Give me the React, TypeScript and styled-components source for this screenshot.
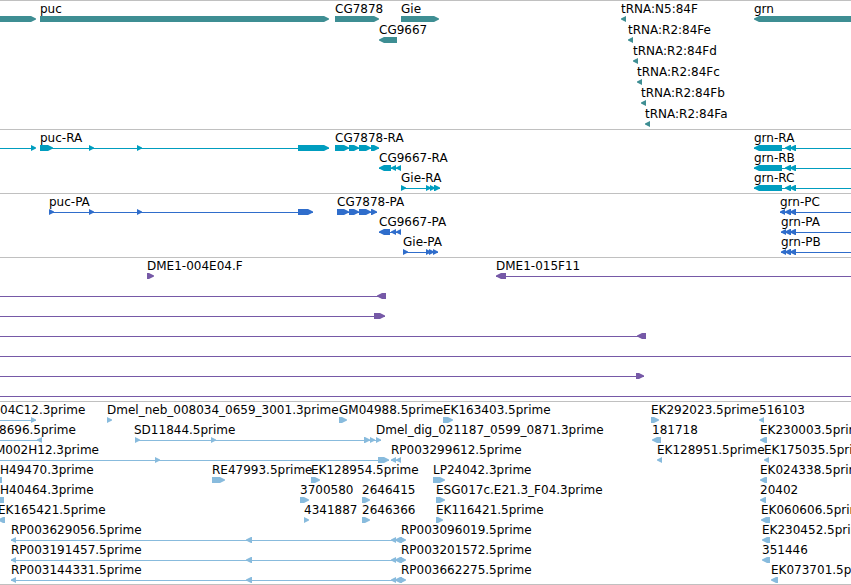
import React from "react";
import styled, { createGlobalStyle } from "styled-components";

type Dir = "l" | "r";
type Block = [start: number, end: number, dir: Dir];

interface Label {
  at: number;
  text: string;
}

interface Lane {
  labels?: Label[];
  lines?: [number, number][];
  blocks?: Block[];
}

interface TrackData {
  name: string;
  color: string;
  gap?: number;
  lanes: Lane[];
}

/* Coordinate beyond any window width, for features that run off the view. */
const END = 6000;
const HEAD = 5;

const label = (at: number, text: string): Label => ({ at, text });

const grnTranscript: Block[] = [
  [754, 782, "l"],
  [785, 791, "l"],
  [790, 796, "l"],
];

const grnProtein = (start: number): Block[] => [
  [start, start + 5, "l"],
  [785, 791, "l"],
  [790, 796, "l"],
];

const pairedReads: Block[] = [
  [11, 16, "l"],
  [246, 252, "l"],
  [391, 396, "l"],
  [395, 402, "l"],
  [400, 406, "r"],
];

const tracks: TrackData[] = [
  {
    name: "Genes",
    color: "#3e8e93",
    gap: 1,
    lanes: [
      {
        labels: [
          label(40, "puc"),
          label(335, "CG7878"),
          label(401, "Gie"),
          label(621, "tRNA:N5:84F"),
          label(754, "grn"),
        ],
        blocks: [
          [-20, 36, "r"],
          [40, 329, "r"],
          [335, 379, "r"],
          [401, 439, "r"],
          [621, 626, "l"],
          [754, END, "l"],
        ],
      },
      {
        labels: [label(379, "CG9667"), label(628, "tRNA:R2:84Fe")],
        blocks: [
          [379, 397, "l"],
          [628, 633, "l"],
        ],
      },
      { labels: [label(633, "tRNA:R2:84Fd")], blocks: [[633, 638, "l"]] },
      { labels: [label(637, "tRNA:R2:84Fc")], blocks: [[637, 642, "l"]] },
      { labels: [label(641, "tRNA:R2:84Fb")], blocks: [[641, 646, "l"]] },
      { labels: [label(645, "tRNA:R2:84Fa")], blocks: [[645, 650, "l"]] },
    ],
  },
  {
    name: "Transcripts",
    color: "#009dbf",
    lanes: [
      {
        labels: [label(40, "puc-RA"), label(335, "CG7878-RA"), label(754, "grn-RA")],
        lines: [[-20, 31], [40, 329], [335, 379], [754, END]],
        blocks: [
          [31, 36, "r"],
          [40, 53, "r"],
          [89, 94, "r"],
          [137, 142, "r"],
          [298, 329, "r"],
          [335, 349, "r"],
          [349, 359, "r"],
          [359, 371, "r"],
          [371, 379, "r"],
          ...grnTranscript,
        ],
      },
      {
        labels: [label(379, "CG9667-RA"), label(754, "grn-RB")],
        lines: [[379, 401], [754, END]],
        blocks: [[379, 391, "l"], [391, 396, "l"], [396, 401, "l"], ...grnTranscript],
      },
      {
        labels: [label(401, "Gie-RA"), label(754, "grn-RC")],
        lines: [[401, 440], [754, END]],
        blocks: [
          [401, 406, "r"],
          [426, 431, "r"],
          [430, 435, "r"],
          [434, 440, "r"],
          ...grnTranscript,
        ],
      },
    ],
  },
  {
    name: "Proteins",
    color: "#2f6dcb",
    lanes: [
      {
        labels: [label(49, "puc-PA"), label(337, "CG7878-PA"), label(780, "grn-PC")],
        lines: [[49, 313], [337, 377], [780, END]],
        blocks: [
          [49, 54, "r"],
          [89, 94, "r"],
          [137, 142, "r"],
          [298, 313, "r"],
          [337, 349, "r"],
          [349, 359, "r"],
          [359, 371, "r"],
          [371, 377, "r"],
          ...grnProtein(780),
        ],
      },
      {
        labels: [label(379, "CG9667-PA"), label(781, "grn-PA")],
        lines: [[379, 401], [781, END]],
        blocks: [[379, 390, "l"], [391, 396, "l"], [396, 401, "l"], ...grnProtein(781)],
      },
      {
        labels: [label(403, "Gie-PA"), label(781, "grn-PB")],
        lines: [[403, 438], [781, END]],
        blocks: [
          [403, 408, "r"],
          [426, 431, "r"],
          [429, 434, "r"],
          [433, 438, "r"],
          ...grnProtein(781),
        ],
      },
    ],
  },
  {
    name: "Clones",
    color: "#7659a7",
    lanes: [
      {
        labels: [label(147, "DME1-004E04.F"), label(496, "DME1-015F11")],
        lines: [[496, END]],
        blocks: [
          [147, 154, "r"],
          [496, 506, "l"],
        ],
      },
      { lines: [[0, 386]], blocks: [[377, 386, "l"]] },
      { lines: [[0, 385]], blocks: [[374, 385, "r"]] },
      { lines: [[0, 646]], blocks: [[637, 646, "l"]] },
      { lines: [[0, END]] },
      { lines: [[0, 644]], blocks: [[636, 644, "r"]] },
      { lines: [[0, END]] },
    ],
  },
  {
    name: "ESTs",
    color: "#88bbdd",
    lanes: [
      {
        labels: [
          label(0, "04C12.3prime"),
          label(107, "Dmel_neb_008034_0659_3001.3prime"),
          label(339, "GM04988.5prime"),
          label(443, "EK163403.5prime"),
          label(651, "EK292023.5prime"),
          label(759, "516103"),
        ],
        lines: [[0, 36]],
        blocks: [
          [31, 36, "r"],
          [107, 112, "r"],
          [339, 347, "r"],
          [443, 453, "r"],
          [651, 659, "r"],
          [759, 764, "l"],
        ],
      },
      {
        labels: [
          label(-1, "8696.5prime"),
          label(134, "SD11844.5prime"),
          label(376, "Dmel_dig_021187_0599_0871.3prime"),
          label(652, "181718"),
          label(760, "EK230003.5prime"),
        ],
        lines: [[0, 42], [135, 381]],
        blocks: [
          [37, 42, "l"],
          [135, 140, "r"],
          [211, 216, "r"],
          [364, 370, "r"],
          [370, 375, "r"],
          [376, 381, "r"],
          [652, 661, "l"],
          [760, 767, "l"],
        ],
      },
      {
        labels: [
          label(-5, "M002H12.3prime"),
          label(391, "RP003299612.5prime"),
          label(657, "EK128951.5prime"),
          label(764, "EK175035.5prime"),
        ],
        lines: [[0, 389], [391, 401]],
        blocks: [
          [155, 160, "r"],
          [378, 389, "r"],
          [391, 396, "l"],
          [396, 401, "l"],
          [657, 662, "l"],
          [764, 769, "l"],
        ],
      },
      {
        labels: [
          label(0, "H49470.3prime"),
          label(212, "RE47993.5prime"),
          label(311, "EK128954.5prime"),
          label(433, "LP24042.3prime"),
          label(760, "EK024338.5prime"),
        ],
        blocks: [
          [-20, 2, "l"],
          [212, 225, "r"],
          [311, 320, "r"],
          [433, 445, "r"],
          [760, 767, "l"],
        ],
      },
      {
        labels: [
          label(0, "H40464.3prime"),
          label(300, "3700580"),
          label(362, "2646415"),
          label(436, "ESG017c.E21.3_F04.3prime"),
          label(760, "20402"),
        ],
        blocks: [
          [-20, 4, "l"],
          [300, 309, "r"],
          [362, 370, "r"],
          [436, 445, "r"],
          [760, 766, "l"],
        ],
      },
      {
        labels: [
          label(-2, "EK165421.5prime"),
          label(304, "4341887"),
          label(362, "2646366"),
          label(436, "EK116421.5prime"),
          label(761, "EK060606.5prime"),
        ],
        blocks: [
          [-2, 5, "l"],
          [304, 309, "r"],
          [362, 370, "r"],
          [436, 443, "r"],
          [761, 770, "l"],
        ],
      },
      {
        labels: [
          label(11, "RP003629056.5prime"),
          label(401, "RP003096019.5prime"),
          label(762, "EK230452.5prime"),
        ],
        lines: [[11, 401]],
        blocks: [...pairedReads, [762, 770, "l"]],
      },
      {
        labels: [
          label(11, "RP003191457.5prime"),
          label(401, "RP003201572.5prime"),
          label(762, "351446"),
        ],
        lines: [[11, 401]],
        blocks: [...pairedReads, [762, 770, "l"]],
      },
      {
        labels: [
          label(11, "RP003144331.5prime"),
          label(401, "RP003662275.5prime"),
          label(771, "EK073701.5prime"),
        ],
        lines: [[11, 401]],
        blocks: [...pairedReads, [771, 778, "l"]],
      },
    ],
  },
];

const GlobalStyle = createGlobalStyle`
  body {
    margin: 0;
    background: #ffffff;
    color: #000000;
    font-family: "DejaVu Sans", Verdana, sans-serif;
    font-size: 12px;
  }
`;

const Browser = styled.main`
  overflow: hidden;
  border-bottom: 1px solid #c0c0c0;
`;

const Track = styled.section<{ $color: string; $gap: number }>`
  display: flex;
  flex-direction: column;
  gap: ${(p) => p.$gap}px;
  padding-bottom: 3px;
  border-top: 1px solid #c0c0c0;
  color: ${(p) => p.$color};

  &:last-child {
    padding-bottom: 2px;
  }
`;

const LaneRow = styled.div`
  display: flex;
  flex-direction: column;
  height: 20px;
`;

const LabelStrip = styled.div`
  display: grid;
  grid-template-columns: minmax(0, 1fr);
  height: 15px;
`;

/* Every name shares the one grid cell, so neighbours may run into each other. */
const FeatureName = styled.span<{ $at: number }>`
  grid-area: 1 / 1;
  margin-left: ${(p) => p.$at}px;
  line-height: 17px;
  white-space: nowrap;
  color: #000000;
`;

const GlyphStrip = styled.svg`
  display: block;
  width: 100%;
  height: 5px;
  overflow: visible;
  fill: currentColor;
`;

/* A six pixel high bar with a slightly rounded head on the strand's side. */
const blockPath = ([start, end, dir]: Block): string => {
  const [tail, tip, s] = dir === "r" ? [start, end, 1] : [end, start, -1];
  const neck = tip - s * HEAD;
  const cheek = tip - s * 1.5;
  return `M${tail} 0H${neck}L${cheek} 1.7L${tip} 2.5V3.5L${cheek} 4.3L${neck} 6H${tail}Z`;
};

function LaneView({ labels = [], lines = [], blocks = [] }: Lane) {
  return (
    <LaneRow>
      <LabelStrip>
        {labels.map((l) => (
          <FeatureName key={l.text} $at={l.at}>
            {l.text}
          </FeatureName>
        ))}
      </LabelStrip>
      <GlyphStrip aria-hidden="true">
        {lines.map(([from, to]) => (
          <rect key={from} x={from} y={3} width={to - from} height={1} />
        ))}
        {blocks.map((b) => (
          <path key={b.join()} d={blockPath(b)} />
        ))}
      </GlyphStrip>
    </LaneRow>
  );
}

export default function App() {
  return (
    <>
      <GlobalStyle />
      <Browser>
        {tracks.map((t) => (
          <Track key={t.name} aria-label={t.name} $color={t.color} $gap={t.gap ?? 0}>
            {t.lanes.map((lane, i) => (
              <LaneView key={i} {...lane} />
            ))}
          </Track>
        ))}
      </Browser>
    </>
  );
}
